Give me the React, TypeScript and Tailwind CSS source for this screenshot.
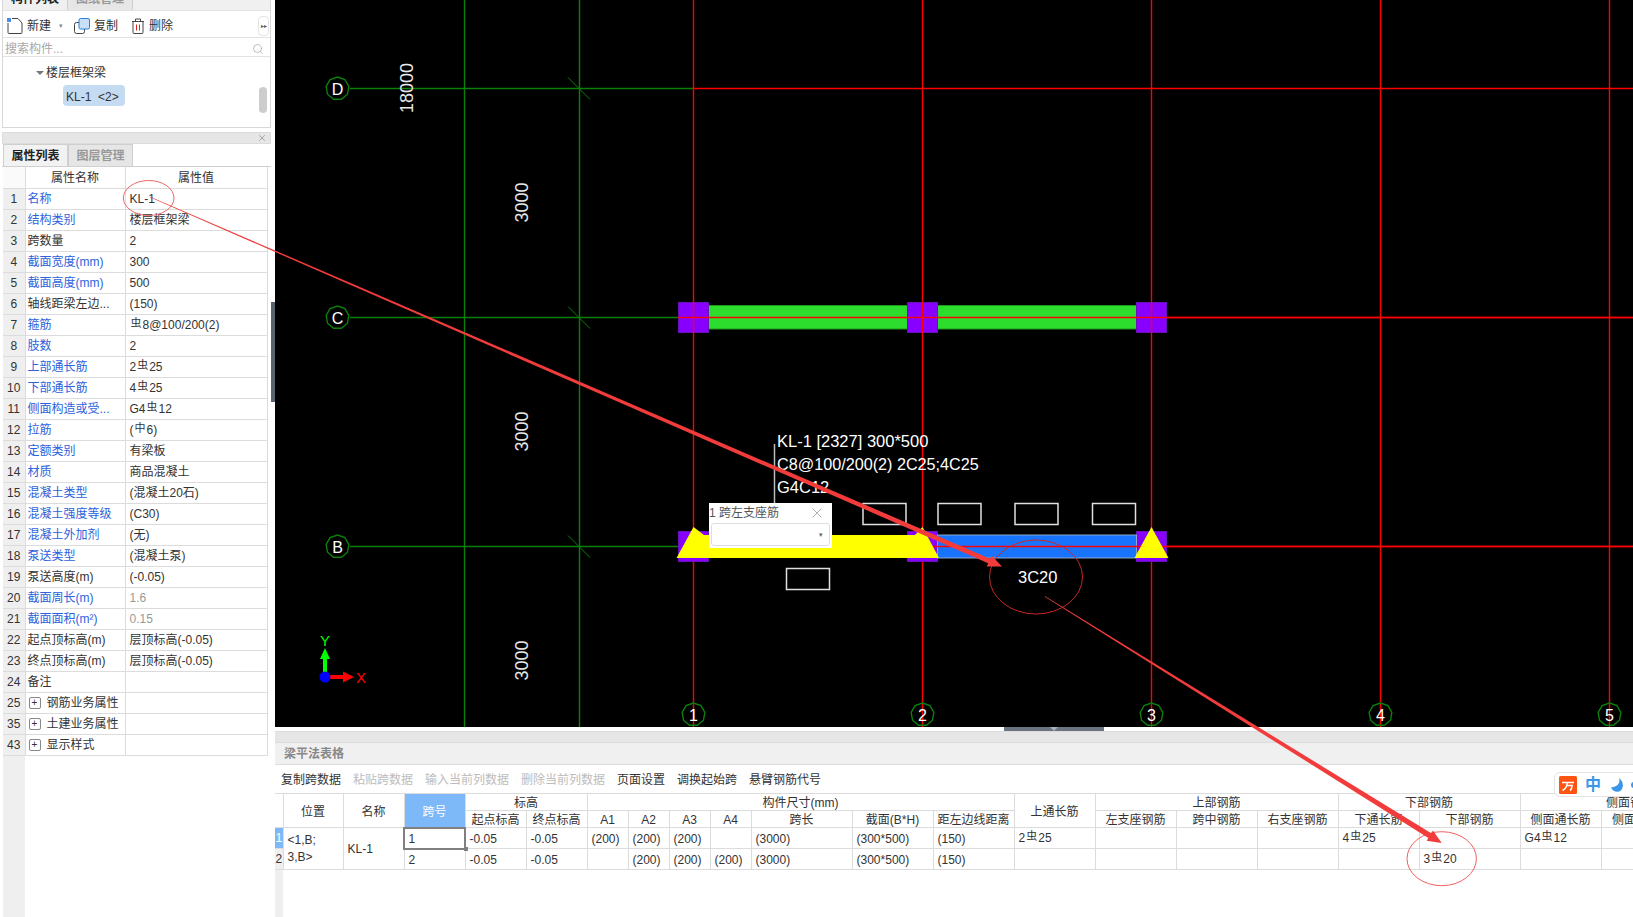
import type { ReactNode } from "react";
import { Search, X } from "lucide-react";

// rebar grade mark, small and raised like the software's own glyph
const R = ({ c = "虫" }: { c?: string }) => <span className="text-[11px] align-[2px] mx-px">{c}</span>;

type Prop = { n: number; label: string; value?: ReactNode; blue?: boolean; dim?: boolean; group?: boolean };

const props: Prop[] = [
  { n: 1, label: "名称", value: "KL-1", blue: true },
  { n: 2, label: "结构类别", value: "楼层框架梁", blue: true },
  { n: 3, label: "跨数量", value: "2" },
  { n: 4, label: "截面宽度(mm)", value: "300", blue: true },
  { n: 5, label: "截面高度(mm)", value: "500", blue: true },
  { n: 6, label: "轴线距梁左边...", value: "(150)" },
  { n: 7, label: "箍筋", value: <><R />8@100/200(2)</>, blue: true },
  { n: 8, label: "肢数", value: "2", blue: true },
  { n: 9, label: "上部通长筋", value: <>2<R />25</>, blue: true },
  { n: 10, label: "下部通长筋", value: <>4<R />25</>, blue: true },
  { n: 11, label: "侧面构造或受...", value: <>G4<R />12</>, blue: true },
  { n: 12, label: "拉筋", value: <>(<R c="中" />6)</>, blue: true },
  { n: 13, label: "定额类别", value: "有梁板", blue: true },
  { n: 14, label: "材质", value: "商品混凝土", blue: true },
  { n: 15, label: "混凝土类型", value: "(混凝土20石)", blue: true },
  { n: 16, label: "混凝土强度等级", value: "(C30)", blue: true },
  { n: 17, label: "混凝土外加剂", value: "(无)", blue: true },
  { n: 18, label: "泵送类型", value: "(混凝土泵)", blue: true },
  { n: 19, label: "泵送高度(m)", value: "(-0.05)" },
  { n: 20, label: "截面周长(m)", value: "1.6", blue: true, dim: true },
  { n: 21, label: "截面面积(m²)", value: "0.15", blue: true, dim: true },
  { n: 22, label: "起点顶标高(m)", value: "层顶标高(-0.05)" },
  { n: 23, label: "终点顶标高(m)", value: "层顶标高(-0.05)" },
  { n: 24, label: "备注" },
  { n: 25, label: "钢筋业务属性", group: true },
  { n: 35, label: "土建业务属性", group: true },
  { n: 43, label: "显示样式", group: true },
];

const Tab = ({ label, active }: { label: string; active?: boolean }) => (
  <div className={`w-[65px] h-full flex items-center justify-center border border-b-0 border-[#cfcfcf] text-xs ${active ? "bg-[#f2f2f2] text-[#222] font-bold" : "bg-[#e6e6e6] text-[#999] font-bold"}`}>
    {label}
  </div>
);

function LeftPanel() {
  return (
    <aside className="w-[271px] shrink-0 flex flex-col pl-[2px] bg-white">
      <div className="h-[128px] w-[269px] border border-t-0 border-[#d8d8d8] flex flex-col">
        <div className="h-[10px] shrink-0 bg-[#f0f0f0] flex items-end overflow-hidden">
          <div className="w-[65px] h-[22px] shrink-0 flex items-center justify-center text-xs font-bold text-[#222] border-r border-[#cfcfcf]">构件列表</div>
          <div className="w-[65px] h-[22px] shrink-0 flex items-center justify-center text-xs font-bold text-[#999] bg-[#e6e6e6] border-r border-[#cfcfcf]">图纸管理</div>
        </div>
        <div className="h-[28px] shrink-0 border-t border-[#e2e2e2] border-b flex items-center pl-[4px] pr-[1px] pt-[3px] text-xs text-[#333]">
          <svg width="16" height="16" viewBox="0 0 16 16" fill="none" className="shrink-0">
            <path d="M1 5v9.5a1 1 0 0 0 1 1h12a1 1 0 0 0 1-1V5l-4-4.5H5" stroke="#444" strokeWidth="1" />
            <rect x="0" y="0" width="4" height="4" fill="#4a90e2" />
          </svg>
          <span className="ml-[4px]">新建</span>
          <span className="ml-[8px] text-[7px] text-[#888]">▾</span>
          <svg width="16" height="16" viewBox="0 0 16 16" fill="none" className="ml-[11px] shrink-0">
            <rect x="0.5" y="4.5" width="10" height="11" rx="2" stroke="#444" />
            <rect x="5" y="0.5" width="10.5" height="10.5" rx="1.5" fill="#c7e0f8" stroke="#2f7fd6" />
          </svg>
          <span className="ml-[4px]">复制</span>
          <svg width="14" height="16" viewBox="0 0 14 16" fill="none" className="ml-[13px] shrink-0">
            <path d="M1 3.5h12M4.5 3.5V1h5v2.5M2 3.5v11a1 1 0 0 0 1 1h8a1 1 0 0 0 1-1v-11" stroke="#444" />
            <path d="M5.5 6.5v6M8.5 6.5v6" stroke="#e02020" />
          </svg>
          <span className="ml-[4px]">删除</span>
          <div className="ml-auto w-[11px] h-[20px] rounded-sm border border-[#e4e4e4] flex items-center justify-center text-[6px] text-[#555]">▸▸</div>
        </div>
        <div className="h-[19px] shrink-0 border-b border-[#e2e2e2] flex items-center justify-between pl-[2px] pr-[6px] pt-[3px] text-xs text-[#a8a8a8]">
          <span>搜索构件...</span>
          <Search size={12} strokeWidth={1.5} color="#aaa" />
        </div>
        <div className="flex-1 flex relative pt-[7px] text-xs text-[#333]">
          <div className="flex-1 flex flex-col">
            <div className="h-[18px] flex items-center pl-[33px]">
              <span className="w-0 h-0 border-x-[4px] border-x-transparent border-t-[4px] border-t-[#777] mr-[2px]" />
              楼层框架梁
            </div>
            <div className="mt-[3px] ml-[60px] w-[62px] h-[21px] rounded-sm bg-[#c5dbf2] flex items-center pl-[3px] pt-[2px] whitespace-pre">{"KL-1  <2>"}</div>
          </div>
          <div className="absolute left-[256px] top-[30px] w-[8px] h-[26px] rounded-full bg-[#cdcdcd]" />
        </div>
      </div>
      <div className="h-[4px] shrink-0" />
      <div className="h-[12px] w-[269px] shrink-0 bg-[#e6e6e6] border border-[#dcdcdc] flex items-center justify-end pr-[3px]">
        <X size={10} color="#999" />
      </div>
      <div className="h-[23px] shrink-0 flex pl-px border-b border-[#cfcfcf] w-[269px]">
        <Tab label="属性列表" active />
        <Tab label="图层管理" />
      </div>
      <div className="flex-1 flex flex-col relative">
        <table className="table-fixed border-collapse w-[264px] ml-px text-xs text-[#333]">
          <colgroup>
            <col className="w-[22px]" />
            <col className="w-[100px]" />
            <col className="w-[142px]" />
          </colgroup>
          <thead>
            <tr className="h-[21px]">
              <th className="border-r border-b border-[#dcdcdc] bg-[#fafafa]" />
              <th className="border-r border-b border-[#dcdcdc] font-normal pt-px">属性名称</th>
              <th className="border-r border-b border-[#dcdcdc] font-normal pt-px">属性值</th>
            </tr>
          </thead>
          <tbody>
            {props.map((p) => (
              <tr key={p.n} className="h-[21px]">
                <td className="border-r border-b border-[#dcdcdc] bg-[#efefef] text-center p-0">{p.n}</td>
                <td className={`border-r border-b border-[#dcdcdc] pl-[2px] p-0 whitespace-nowrap overflow-hidden ${p.blue ? "text-[#2b62dc]" : ""}`}>
                  {p.group ? (
                    <span className="flex items-center">
                      <span className="w-[12px] h-[12px] ml-px mr-[6px] rounded-[2px] border border-[#888] flex items-center justify-center text-[10px] leading-none">+</span>
                      {p.label}
                    </span>
                  ) : (
                    p.label
                  )}
                </td>
                <td className={`border-r border-b border-[#dcdcdc] pl-[4px] p-0 whitespace-nowrap ${p.dim ? "text-[#999]" : ""}`}>{p.value}</td>
              </tr>
            ))}
          </tbody>
        </table>
        <div className="flex-1 w-[22px] ml-px bg-[#efefef]" />
      </div>
    </aside>
  );
}

// the axis bubbles in the drawing are coarse polygons rather than true circles
const ngon = (cx: number, cy: number, r: number, n = 9) =>
  Array.from({ length: n }, (_, i) => {
    const a = (i * 2 * Math.PI) / n - Math.PI / 2;
    return `${cx + r * Math.cos(a)},${cy + r * Math.sin(a)}`;
  }).join(" ");

const GREEN = "#0a800a";
const RED = "#ff0000";
const LINE = 1.4;
const colsX = [693.5, 922.5, 1151.5, 1380.5, 1609.5];
const rowsY = [
  { y: 88.5, name: "D" },
  { y: 317.5, name: "C" },
  { y: 546.5, name: "B" },
];

function Drawing() {
  return (
    <svg viewBox="275 0 1358 727" className="absolute inset-0 w-full h-full" fontFamily="'Liberation Sans', sans-serif">
      {[464.5, 579.5].map((x) => (
        <line key={x} x1={x} y1={0} x2={x} y2={727} stroke={GREEN} strokeWidth={LINE} />
      ))}
      {rowsY.map((r) => (
        <g key={r.name}>
          <line x1={350} y1={r.y} x2={693} y2={r.y} stroke={GREEN} strokeWidth={LINE} />
          <line x1={568} y1={r.y - 11} x2={590} y2={r.y + 11} stroke={GREEN} strokeWidth={1} />
          <line x1={693} y1={r.y} x2={1633} y2={r.y} stroke={RED} strokeWidth={LINE} />
        </g>
      ))}
      {colsX.map((x) => (
        <line key={x} x1={x} y1={0} x2={x} y2={727} stroke={RED} strokeWidth={LINE} />
      ))}

      {/* C line: green beam */}
      <rect x={708} y={305.5} width={430} height={23.5} fill="#2ddd2d" stroke="#1c9a1c" />
      <line x1={693} y1={317.5} x2={1633} y2={317.5} stroke={RED} strokeWidth={LINE} />
      {[678, 907, 1136].map((x) => (
        <g key={x}>
          <rect x={x + 0.5} y={302.5} width={30} height={30} fill="#8800ff" stroke="#6a10b8" />
          <line x1={x} y1={317.5} x2={x + 31} y2={317.5} stroke={RED} strokeWidth={LINE} />
          <line x1={x + 15.5} y1={302} x2={x + 15.5} y2={333} stroke={RED} strokeWidth={LINE} />
        </g>
      ))}

      {/* B line: blue beam with the first span picked in yellow */}
      {[678, 907, 1136].map((x) => (
        <rect key={x} x={x + 0.5} y={531.5} width={30} height={30} fill="#8800ff" stroke="#6a10b8" />
      ))}
      <rect x={937.5} y={535} width={199} height={23} fill="#1874ff" stroke="#8aa8c8" />
      <line x1={930} y1={546.5} x2={1136} y2={546.5} stroke={RED} strokeWidth={LINE} />
      <line x1={1136} y1={546.5} x2={1633} y2={546.5} stroke={RED} strokeWidth={LINE} />
      <polygon points="693.5,527 704,535 915,535 922.5,527 939,558 676.5,558" fill="#ffff00" />
      <polygon points="1151.5,527 1168.5,558 1134.5,558" fill="#ffff00" />

      {/* rebar input boxes */}
      {[
        [863, 503],
        [938, 503],
        [1015, 503],
        [1092.5, 503],
        [786.5, 568],
      ].map(([x, y]) => (
        <rect key={x} x={x} y={y + 0.5} width={43} height={21} fill="none" stroke="#e0e0e0" strokeWidth={1.5} />
      ))}

      <line x1={774.5} y1={444} x2={774.5} y2={503} stroke="#bbb" strokeWidth={1.5} />
      <g fill="#fff" fontSize={16.5}>
        <text x={777} y={447}>KL-1 [2327] 300*500</text>
        <text x={777} y={470} fontSize={16.2}>C8@100/200(2) 2C25;4C25</text>
        <text x={777} y={493}>G4C12</text>
        <text x={1018} y={582.5}>3C20</text>
      </g>

      {/* dimensions */}
      <g fill="#e8e8e8" fontSize={18}>
        <text transform="translate(413 88) rotate(-90)" textAnchor="middle">18000</text>
        <text transform="translate(528 202.5) rotate(-90)" textAnchor="middle">3000</text>
        <text transform="translate(528 431.5) rotate(-90)" textAnchor="middle">3000</text>
        <text transform="translate(528 660.5) rotate(-90)" textAnchor="middle">3000</text>
      </g>

      {/* axis bubbles */}
      {rowsY.map((r) => (
        <g key={r.name}>
          <polygon points={ngon(337.5, r.y, 11.5)} fill="#000" stroke={GREEN} strokeWidth={1.4} />
          <text x={337.5} y={r.y + 6} fill="#fff" fontSize={16} textAnchor="middle">{r.name}</text>
        </g>
      ))}
      {colsX.map((x, i) => (
        <g key={x}>
          <polygon points={ngon(x, 714.5, 11.5)} fill="none" stroke={GREEN} strokeWidth={1.4} />
          <text x={x} y={720.5} fill="#fff" fontSize={16} textAnchor="middle">{i + 1}</text>
        </g>
      ))}

      {/* coordinate gizmo */}
      <rect x={323} y={658} width={4} height={18} fill="#00ff00" />
      <polygon points="325,648 330,659 320,659" fill="#00ff00" />
      <text x={325} y={646} fill="#00ff00" fontSize={15} textAnchor="middle">Y</text>
      <rect x={325} y={675} width={19} height={4} fill="#ff0000" />
      <polygon points="343,671.5 354,677 343,682.5" fill="#ff0000" />
      <text x={356} y={682.5} fill="#ff0000" fontSize={15}>X</text>
      <circle cx={325} cy={677} r={5.5} fill="#0000ff" />
    </svg>
  );
}

function SpanPopup() {
  return (
    <div className="absolute left-[434px] top-[503px] w-[123px] h-[45px] bg-white flex flex-col text-xs text-[#555]">
      <div className="h-[20px] flex items-center justify-between pr-[7px]">
        <span>1 跨左支座筋</span>
        <X size={16} strokeWidth={1} color="#888" />
      </div>
      <div className="mx-[2px] h-[23px] rounded-[3px] border border-[#dedede] flex items-center justify-end pr-[6px] text-[7px] text-[#666]">▾</div>
    </div>
  );
}

const th = "border-r border-b border-[#dcdcdc] font-normal p-0 pt-[2px] leading-[14px] whitespace-nowrap";
const cell = "border-r border-b border-[#dcdcdc] pl-[4px] p-0 whitespace-nowrap";
const td = `${cell} pt-px leading-[16px]`;
// cells holding the rebar mark sit a little higher in the grid
const tdBar = `${cell} pb-[2px] leading-[12px]`;

const colW = [
  8, 60, 61, 61, 61, 61, 41, 41, 41, 41, 101, 81, 81, 81, 81, 81, 81, 81, 101, 81, 106, 33,
];

const Rail = ({ n, active }: { n: number; active?: boolean }) => (
  <td className={`border-r border-b border-[#dcdcdc] p-0 text-center leading-[16px] overflow-hidden ${active ? "bg-[#7db8f8] text-white" : "bg-[#efefef]"}`}>{n}</td>
);

function BeamTable() {
  return (
    <table className="table-fixed border-collapse w-[1465px] shrink-0 text-xs text-[#333] border-t border-[#dcdcdc]">
      <colgroup>
        {colW.map((w, i) => (
          <col key={i} style={{ width: w }} />
        ))}
      </colgroup>
      <thead>
        <tr className="h-[17px]">
          <th rowSpan={2} className={th} />
          <th rowSpan={2} className={th}>位置</th>
          <th rowSpan={2} className={th}>名称</th>
          <th rowSpan={2} className={`${th} bg-[#7db8f8] text-white`}>跨号</th>
          <th colSpan={2} className={th}>标高</th>
          <th colSpan={7} className={th}>构件尺寸(mm)</th>
          <th rowSpan={2} className={th}>上通长筋</th>
          <th colSpan={3} className={th}>上部钢筋</th>
          <th colSpan={2} className={th}>下部钢筋</th>
          <th colSpan={3} className={th}>侧面钢筋</th>
        </tr>
        <tr className="h-[17px]">
          {["起点标高", "终点标高", "A1", "A2", "A3", "A4", "跨长", "截面(B*H)", "距左边线距离", "左支座钢筋", "跨中钢筋", "右支座钢筋", "下通长筋", "下部钢筋", "侧面通长筋", "侧面原位标注筋"].map((h) => (
            <th key={h} className={`${th} overflow-hidden`}>{h}</th>
          ))}
          <th className={th} />
        </tr>
      </thead>
      <tbody>
        <tr className="h-[21px]">
          <Rail n={1} active />
          <td rowSpan={2} className={`${cell} leading-[17px]`}>
            <div>&lt;1,B;</div>
            <div>3,B&gt;</div>
          </td>
          <td rowSpan={2} className={td}>KL-1</td>
          <td className={`${td} relative outline-2 -outline-offset-1 outline-[#808080]`}>
            1
            <span className="absolute -right-[3px] -bottom-[3px] w-[4px] h-[4px] bg-[#808080]" />
          </td>
          <td className={td}>-0.05</td>
          <td className={td}>-0.05</td>
          <td className={td}>(200)</td>
          <td className={td}>(200)</td>
          <td className={td}>(200)</td>
          <td className={td} />
          <td className={td}>(3000)</td>
          <td className={td}>(300*500)</td>
          <td className={td}>(150)</td>
          <td className={tdBar}>2<R />25</td>
          <td className={td} />
          <td className={td} />
          <td className={td} />
          <td className={tdBar}>4<R />25</td>
          <td className={td} />
          <td className={tdBar}>G4<R />12</td>
          <td className={td} />
          <td className={td} />
        </tr>
        <tr className="h-[21px]">
          <Rail n={2} />
          <td className={td}>2</td>
          <td className={td}>-0.05</td>
          <td className={td}>-0.05</td>
          <td className={td} />
          <td className={td}>(200)</td>
          <td className={td}>(200)</td>
          <td className={td}>(200)</td>
          <td className={td}>(3000)</td>
          <td className={td}>(300*500)</td>
          <td className={td}>(150)</td>
          <td className={td} />
          <td className={td} />
          <td className={td} />
          <td className={td} />
          <td className={td} />
          <td className={tdBar}>3<R />20</td>
          <td className={td} />
          <td className={td} />
          <td className={td} />
        </tr>
      </tbody>
    </table>
  );
}

function BottomPanel() {
  const tools: [string, boolean][] = [
    ["复制跨数据", true],
    ["粘贴跨数据", false],
    ["输入当前列数据", false],
    ["删除当前列数据", false],
    ["页面设置", true],
    ["调换起始跨", true],
    ["悬臂钢筋代号", true],
  ];
  return (
    <div className="flex-1 min-h-0 flex flex-col bg-white overflow-hidden relative">
      <div className="h-[4px] shrink-0 relative">
        <div className="absolute left-[729px] top-0 w-[100px] h-[4px] bg-[#6a7480] flex justify-center">
          <span className="w-0 h-0 border-x-[4px] border-x-transparent border-t-[4px] border-t-[#a8b0b8]" />
        </div>
      </div>
      <div className="h-[12px] shrink-0 bg-[#e6e6e6] border-y border-[#dcdcdc]" />
      <div className="h-[22px] shrink-0 bg-[#f0f0f0] border-b border-[#dcdcdc] flex items-center pl-[9px] pt-px text-xs font-bold text-[#888]">梁平法表格</div>
      <div className="h-[28px] shrink-0 flex items-center gap-[12px] pl-[6px] pt-[2px] text-xs">
        {tools.map(([t, on]) => (
          <span key={t} className={on ? "text-[#333]" : "text-[#bcbcbc]"}>{t}</span>
        ))}
      </div>
      <BeamTable />
      <div className="flex-1 w-[8px] bg-[#efefef]" />
    </div>
  );
}

function ImeBar() {
  return (
    <div className="absolute left-[1554px] top-[772px] w-[90px] h-[25px] rounded-md bg-white border border-[#e4e4e4] flex items-center pl-[4px]">
      <svg width="18" height="18" viewBox="0 0 18 18" className="shrink-0">
        <rect width="18" height="18" rx="1.5" fill="#ff5412" />
        <path d="M3 6.5h12M8.5 6.5C8 10 6.5 13 3.5 14.5M7.5 9.5h5.5c0 2-.5 4-2 5" fill="none" stroke="#fff" strokeWidth="1.6" />
      </svg>
      <span className="ml-[8px] text-[16px] leading-none font-bold text-[#3b95e8]">中</span>
      <svg width="16" height="16" viewBox="0 0 16 16" className="ml-[8px] shrink-0">
        <path d="M10 1c1.5 4-.5 9-8 9.5C3.5 14 7 15.5 10 14.5 15 13 15.5 5 10 1z" fill="#3b95e8" />
      </svg>
      <span className="ml-[6px] w-[6px] h-[6px] rounded-full border-2 border-[#3b95e8]" />
    </div>
  );
}

// hand-drawn red markup lying over the whole screenshot
const taper = (x1: number, y1: number, x2: number, y2: number, w1: number, w2: number) => {
  const len = Math.hypot(x2 - x1, y2 - y1);
  const ux = (x2 - x1) / len;
  const uy = (y2 - y1) / len;
  const hx = x2 - ux * 14;
  const hy = y2 - uy * 14;
  const px = -uy;
  const py = ux;
  const pts = [
    [x1 + (px * w1) / 2, y1 + (py * w1) / 2],
    [hx + (px * w2) / 2, hy + (py * w2) / 2],
    [hx + px * 6, hy + py * 6],
    [x2, y2],
    [hx - px * 6, hy - py * 6],
    [hx - (px * w2) / 2, hy - (py * w2) / 2],
    [x1 - (px * w1) / 2, y1 - (py * w1) / 2],
  ];
  return pts.map((p) => p.join(",")).join(" ");
};

function Markup() {
  return (
    <svg viewBox="0 0 1633 917" className="absolute inset-0 w-full h-full pointer-events-none" fill="none">
      <ellipse cx={148.7} cy={198} rx={25.3} ry={17.5} stroke="#ee6666" />
      <ellipse cx={1036} cy={577} rx={46.5} ry={37} stroke="#c42828" />
      <ellipse cx={1441.7} cy={858.7} rx={34.7} ry={27} stroke="#f06060" />
      <polygon points={taper(150, 197, 1002, 566.5, 0.8, 5)} fill="#f23c3c" />
      <polygon points={taper(1045, 596.5, 1441.7, 843, 0.8, 5.5)} fill="#f23c3c" />
    </svg>
  );
}

export default function App() {
  return (
    <div className="relative w-full h-screen overflow-hidden flex bg-white font-['Liberation_Sans','Noto_Sans_CJK_SC',sans-serif]">
      <LeftPanel />
      <div className="w-[4px] shrink-0 flex flex-col bg-white">
        <div className="h-[302px]" />
        <div className="h-[100px] bg-[#59636e]" />
      </div>
      <main className="flex-1 min-w-0 flex flex-col">
        <div className="relative h-[727px] shrink-0 bg-black overflow-hidden">
          <Drawing />
          <SpanPopup />
        </div>
        <BottomPanel />
      </main>
      <ImeBar />
      <Markup />
    </div>
  );
}
